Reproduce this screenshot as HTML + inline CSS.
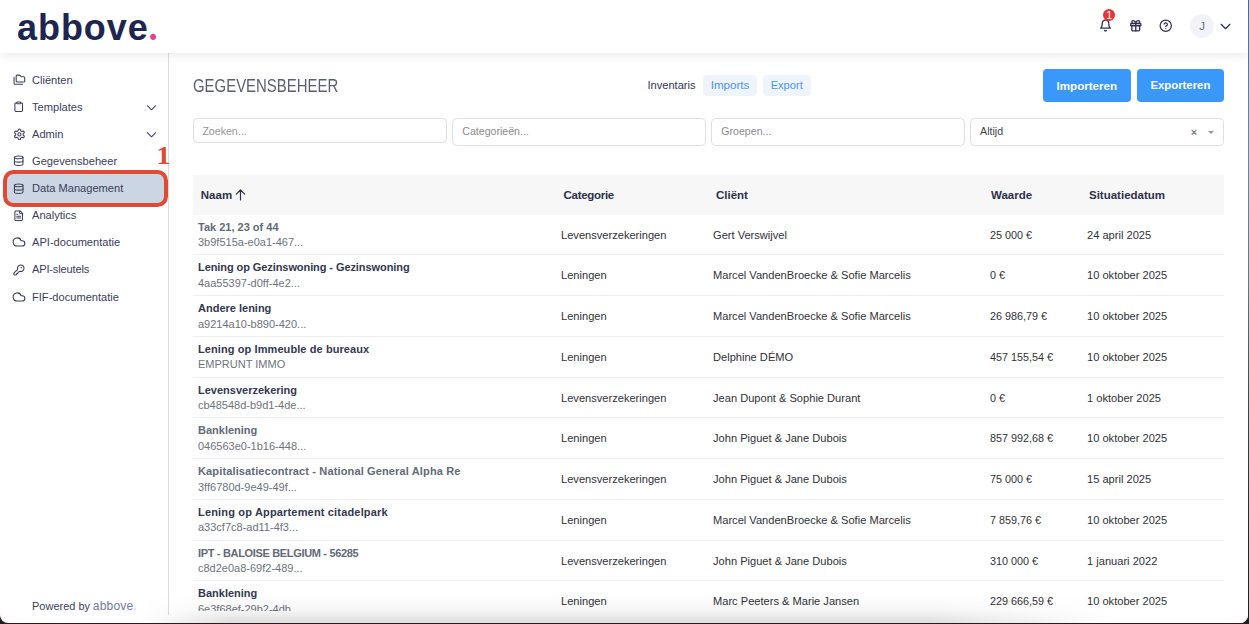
<!DOCTYPE html>
<html lang="nl">
<head>
<meta charset="utf-8">
<title>Gegevensbeheer - abbove</title>
<style>
*{box-sizing:border-box;margin:0;padding:0}
html,body{width:1249px;height:624px;overflow:hidden;background:#241d1f}
body{font-family:"Liberation Sans",sans-serif;color:#2f3553;position:relative}
#app{position:absolute;left:0;top:0;width:1248px;height:623px;background:#fff;overflow:hidden;border-radius:0 0 8px 8px}
#edge-r{position:absolute;left:1247px;top:0;width:2px;height:624px;background:linear-gradient(to bottom,#44699a 0%,#5f7da5 15%,#6c84a3 25%,#6a7480 45%,#3e4447 65%,#2a2426 85%,#231c1e 100%)}
#edge-b{position:absolute;left:0;top:622px;width:1249px;height:2px;background:#241d1f}
#win{position:absolute;left:0;top:0;width:1247.6px;height:622.7px;background:#fff;border-radius:0 0 8px 8px;overflow:hidden}

/* header */
#hdr{position:absolute;left:0;top:0;width:100%;height:52.5px;background:#fff;box-shadow:0 2px 10px rgba(0,0,0,.09);z-index:5}
#logo{position:absolute;left:17px;top:6px;font-weight:bold;font-size:36px;line-height:44px;color:#1d2550;letter-spacing:.95px}
#logo i{font-style:normal;color:#e83e8c;font-family:"Liberation Serif",serif;font-size:37px;margin-left:-.3px;position:relative;top:-.5px}
.hi{position:absolute;display:block}
#badge{position:absolute;left:1103px;top:8.5px;width:12.4px;height:12.4px;border-radius:50%;background:#e53535;color:#fff;font-size:11px;line-height:13.6px;text-align:center}
#ava{position:absolute;left:1190px;top:13.6px;width:24px;height:24px;border-radius:50%;background:#f0f4f8;color:#666c82;font-size:11.5px;line-height:25.5px;text-align:center}

/* sidebar */
#side{position:absolute;left:0;top:52px;width:169px;height:563px;border-right:1px solid #dcdde0}
.ni{position:absolute;left:6px;width:157px;height:25px;font-size:11.1px;line-height:25px;color:#3a405c;padding-left:26px;border-radius:5px;white-space:nowrap}
.ni svg{position:absolute;left:7.3px;top:6.5px;width:11.4px;height:11.4px;fill:none;stroke:#3a405c;stroke-width:2.2;stroke-linecap:round;stroke-linejoin:round}
.ni .chev{left:auto;right:6.5px;top:7px;width:11px;height:11px;stroke-width:2.2}
.ni.act{background:transparent}
#ring{position:absolute;left:3px;top:169.8px;width:165.3px;height:37.2px;border:4.2px solid #e04a35;border-radius:10.5px;background:#cbd5e3}
#one{position:absolute;left:157px;top:142.3px;transform:scaleX(1.1);transform-origin:50% 50%;font-family:"Liberation Serif",serif;font-weight:bold;font-size:26px;line-height:28px;color:#e04a35}
#pow{position:absolute;left:32px;top:597px;font-size:11px;line-height:14px;color:#3a405c;white-space:nowrap}
#pow b{font-weight:normal;color:#707a9c;font-size:12.1px;margin-left:-.3px;letter-spacing:.12px}
#pow b i{font-style:normal;color:#f2a0c4}

/* main */
#main{position:absolute;left:169px;top:52px;width:1079px;height:572px}
h1{position:absolute;left:24px;top:23px;font-weight:normal;font-size:17.8px;line-height:22px;color:#585e76;white-space:nowrap;transform:scaleX(.84);transform-origin:0 50%}
.tab{position:absolute;top:23.1px;height:20.5px;line-height:20.6px;font-size:11.1px;border-radius:4px;text-align:center;white-space:nowrap}
.tab.on{color:#2f3553}
.tab.p{background:#eff3fa;color:#4696f3}
.btn{position:absolute;top:17px;height:33px;line-height:33px;border-radius:4px;background:#3b98fb;color:#fff;font-weight:bold;font-size:11.6px;text-align:center;white-space:nowrap}
.flt{position:absolute;top:66.3px;height:27.3px;border:1px solid #e0e0e0;border-radius:4.5px;background:#fff;font-size:10.6px;line-height:25.5px;color:#8b8b8b;padding-left:9.3px;white-space:nowrap}
.flt.v{color:#444}
.flt.z{height:24.4px;line-height:24.2px;font-size:10.6px;color:#959595;padding-left:8.4px}
.flt .x{position:absolute;right:25.3px;top:.9px;font-size:11px;color:#808080;font-weight:bold}
.flt .c{position:absolute;right:9px;top:11.5px;width:0;height:0;border:3px solid transparent;border-top:3.5px solid #999;border-bottom:0}

/* table */
#tbl{position:absolute;left:24px;top:123px;width:1031px}
.th{position:relative;height:39.5px;background:#f7f7f7;font-weight:bold;font-size:11.5px;line-height:40.3px;color:#2d3148}
.th span,.tr span{position:absolute;white-space:nowrap}
.tr{position:relative;height:40.75px;border-bottom:1px solid #efefef;font-size:11.1px;color:#303238}
.tr span{top:0;line-height:40px}
.c1{left:5px}.c2{left:368px}.c3{left:520px}.c4{left:797px}.c5{left:894px}
.th .c1{left:7.8px}.th .c2{left:370.6px;letter-spacing:-.3px}.th .c3{left:523px}.th .c4{left:798px}.th .c5{left:896px}
.tr .c1{top:5.2px;line-height:15.4px;color:#6d737d;font-size:11px}
.tr .c4{font-size:10.8px}
.tr .c1 b{display:block;color:#333850;font-size:11px}
.tr.m .c1 b{color:#626a78}
#foot{position:absolute;left:169px;top:610.8px;width:1080px;height:14px;background:#fff}
#fade{position:absolute;left:0;top:594px;width:100%;height:29px;background:linear-gradient(to bottom,rgba(0,0,0,0),rgba(0,0,0,.035) 55%,rgba(0,0,0,.13) 100%);-webkit-mask-image:linear-gradient(to right,transparent 140px,#000 230px,#000 930px,transparent 1110px);mask-image:linear-gradient(to right,transparent 140px,#000 230px,#000 930px,transparent 1110px)}
</style>
</head>
<body>
<div id="edge-r"></div>
<div id="edge-b"></div>
<div id="win">

<div id="hdr">
  <div id="logo">abbove<i>.</i></div>
  <svg class="hi" style="left:1099px;top:19px" width="13" height="13" viewBox="0 0 24 24" fill="none" stroke="#2f3553" stroke-width="2.3" stroke-linecap="round" stroke-linejoin="round"><path d="M6 8a6 6 0 0 1 12 0c0 7 3 9 3 9H3s3-2 3-9"/><path d="M10.3 21a1.94 1.94 0 0 0 3.4 0"/></svg>
  <div id="badge">1</div>
  <svg class="hi" style="left:1129px;top:19px" width="13.5" height="13.5" viewBox="0 0 24 24" fill="none" stroke="#2f3553" stroke-width="2.4" stroke-linecap="round" stroke-linejoin="round"><rect x="3" y="8" width="18" height="4" rx="1"/><path d="M12 8v13"/><path d="M19 12v7a2 2 0 0 1-2 2H7a2 2 0 0 1-2-2v-7"/><path d="M7.5 8a2.5 2.5 0 0 1 0-5A4.8 8 0 0 1 12 8a4.8 8 0 0 1 4.5-5 2.5 2.5 0 0 1 0 5"/></svg>
  <svg class="hi" style="left:1159px;top:19.1px" width="13.5" height="13.5" viewBox="0 0 24 24" fill="none" stroke="#2f3553" stroke-width="2.2" stroke-linecap="round" stroke-linejoin="round"><circle cx="12" cy="12" r="10"/><path d="M9.09 9a3 3 0 0 1 5.83 1c0 2-3 3-3 3"/><path d="M12 17h.01"/></svg>
  <div id="ava">J</div>
  <svg class="hi" style="left:1219px;top:20px" width="13" height="13" viewBox="0 0 24 24" fill="none" stroke="#2f3553" stroke-width="2.4" stroke-linecap="round" stroke-linejoin="round"><path d="m4 8 8 8 8-8"/></svg>
</div>

<div id="ring"></div>
<div id="side">
  <div class="ni" style="top:16.00px"><svg viewBox="0 0 24 24" style="width:12.8px;height:12.8px;left:6.9px;top:5.4px;stroke-width:2"><path d="M20 17a2 2 0 0 0 2-2V9a2 2 0 0 0-2-2h-3.9a2 2 0 0 1-1.69-.9l-.81-1.2a2 2 0 0 0-1.67-.9H8a2 2 0 0 0-2 2v9a2 2 0 0 0 2 2Z"/><path d="M2 8v11a2 2 0 0 0 2 2h14"/></svg>Cliënten</div>
  <div class="ni" style="top:42.55px"><svg viewBox="0 0 24 24"><rect width="8" height="4" x="8" y="2" rx="1" ry="1"/><path d="M16 4h2a2 2 0 0 1 2 2v14a2 2 0 0 1-2 2H6a2 2 0 0 1-2-2V6a2 2 0 0 1 2-2h2"/></svg>Templates<svg class="chev" viewBox="0 0 24 24"><path d="m3 8 9 9 9-9"/></svg></div>
  <div class="ni" style="top:69.70px"><svg viewBox="0 0 24 24" style="width:12.8px;height:12.8px;left:6.6px;top:6px;stroke-width:2"><path d="M12.22 2h-.44a2 2 0 0 0-2 2v.18a2 2 0 0 1-1 1.73l-.43.25a2 2 0 0 1-2 0l-.15-.08a2 2 0 0 0-2.73.73l-.22.38a2 2 0 0 0 .73 2.73l.15.1a2 2 0 0 1 1 1.72v.51a2 2 0 0 1-1 1.74l-.15.09a2 2 0 0 0-.73 2.73l.22.38a2 2 0 0 0 2.73.73l.15-.08a2 2 0 0 1 2 0l.43.25a2 2 0 0 1 1 1.73V20a2 2 0 0 0 2 2h.44a2 2 0 0 0 2-2v-.18a2 2 0 0 1 1-1.73l.43-.25a2 2 0 0 1 2 0l.15.08a2 2 0 0 0 2.73-.73l.22-.39a2 2 0 0 0-.73-2.73l-.15-.08a2 2 0 0 1-1-1.74v-.5a2 2 0 0 1 1-1.74l.15-.09a2 2 0 0 0 .73-2.73l-.22-.38a2 2 0 0 0-2.73-.73l-.15.08a2 2 0 0 1-2 0l-.43-.25a2 2 0 0 1-1-1.73V4a2 2 0 0 0-2-2z"/><circle cx="12" cy="12" r="3"/></svg>Admin<svg class="chev" viewBox="0 0 24 24"><path d="m3 8 9 9 9-9"/></svg></div>
  <div class="ni" style="top:96.85px"><svg viewBox="0 0 24 24"><ellipse cx="12" cy="5" rx="9" ry="3"/><path d="M3 5v14a9 3 0 0 0 18 0V5"/><path d="M3 12a9 3 0 0 0 18 0"/></svg>Gegevensbeheer</div>
  <div class="ni act" style="top:124.00px"><svg viewBox="0 0 24 24"><ellipse cx="12" cy="5" rx="9" ry="3"/><path d="M3 5v14a9 3 0 0 0 18 0V5"/><path d="M3 12a9 3 0 0 0 18 0"/></svg>Data Management</div>
  <div class="ni" style="top:151.15px"><svg viewBox="0 0 24 24"><path d="M15 2H6a2 2 0 0 0-2 2v16a2 2 0 0 0 2 2h12a2 2 0 0 0 2-2V7Z"/><path d="M14 2v4a2 2 0 0 0 2 2h4"/><path d="M10 9H8"/><path d="M16 13H8"/><path d="M16 17H8"/></svg>Analytics</div>
  <div class="ni" style="top:178.30px"><svg viewBox="0 0 24 24" style="width:14px;height:14px;left:5.9px;top:5px;stroke-width:1.85"><path d="M17.5 19H9a7 7 0 1 1 6.71-9h1.79a4.5 4.5 0 1 1 0 9Z"/></svg>API-documentatie</div>
  <div class="ni" style="top:205.45px"><svg viewBox="0 0 24 24" style="width:12px;height:12px;left:6.9px;top:6.3px"><path d="M2.586 17.414A2 2 0 0 0 2 18.828V21a1 1 0 0 0 1 1h3a1 1 0 0 0 1-1v-1a1 1 0 0 1 1-1h1a1 1 0 0 0 1-1v-1a1 1 0 0 1 1-1h.172a2 2 0 0 0 1.414-.586l.814-.814a6.5 6.5 0 1 0-4-4z"/><circle cx="16.5" cy="7.5" r=".5" fill="#3a405c"/></svg><span style="letter-spacing:-.18px">API-sleutels</span></div>
  <div class="ni" style="top:232.60px"><svg viewBox="0 0 24 24" style="width:14px;height:14px;left:5.9px;top:5px;stroke-width:1.85"><path d="M17.5 19H9a7 7 0 1 1 6.71-9h1.79a4.5 4.5 0 1 1 0 9Z"/></svg>FIF-documentatie</div>
  <div id="pow" style="top:546.7px">Powered by <b>abbove<i>.</i></b></div>
</div>
<div id="one">1</div>

<div id="main">
  <h1>GEGEVENSBEHEER</h1>
  <div class="tab on" style="left:477.5px;width:50px">Inventaris</div>
  <div class="tab p" style="left:534px;width:54px;font-size:11.6px">Imports</div>
  <div class="tab p" style="left:593.7px;width:48px">Export</div>
  <div class="btn" style="left:873.8px;width:88px">Importeren</div>
  <div class="btn" style="left:968.2px;width:86.4px;font-size:11.35px">Exporteren</div>

  <div class="flt z" style="left:24px;width:253.5px">Zoeken...</div>
  <div class="flt" style="left:283px;width:253.5px">Categorieën...</div>
  <div class="flt" style="left:542px;width:253.5px">Groepen...</div>
  <div class="flt v" style="left:800.8px;width:253.8px">Altijd<span class="x">×</span><span class="c"></span></div>

  <div id="tbl">
    <div class="th"><span class="c1">Naam<svg width="11" height="12" viewBox="0 0 11 12" style="vertical-align:-1.5px;margin-left:2.6px" fill="none" stroke="#2d3148" stroke-width="1.2" stroke-linecap="round" stroke-linejoin="round"><path d="M5.5 11V1M1.3 5.2 5.5 1l4.2 4.2"/></svg></span><span class="c2">Categorie</span><span class="c3">Cliënt</span><span class="c4">Waarde</span><span class="c5">Situatiedatum</span></div>
    <div class="tr m"><span class="c1"><b>Tak 21, 23 of 44</b>3b9f515a-e0a1-467...</span><span class="c2">Levensverzekeringen</span><span class="c3">Gert Verswijvel</span><span class="c4">25 000 €</span><span class="c5">24 april 2025</span></div>
    <div class="tr"><span class="c1"><b style="letter-spacing:-.08px">Lening op Gezinswoning - Gezinswoning</b>4aa55397-d0ff-4e2...</span><span class="c2">Leningen</span><span class="c3">Marcel VandenBroecke &amp; Sofie Marcelis</span><span class="c4">0 €</span><span class="c5">10 oktober 2025</span></div>
    <div class="tr"><span class="c1"><b>Andere lening</b>a9214a10-b890-420...</span><span class="c2">Leningen</span><span class="c3">Marcel VandenBroecke &amp; Sofie Marcelis</span><span class="c4">26 986,79 €</span><span class="c5">10 oktober 2025</span></div>
    <div class="tr"><span class="c1"><b style="letter-spacing:.09px">Lening op Immeuble de bureaux</b>EMPRUNT IMMO</span><span class="c2">Leningen</span><span class="c3">Delphine DÉMO</span><span class="c4">457 155,54 €</span><span class="c5">10 oktober 2025</span></div>
    <div class="tr"><span class="c1"><b>Levensverzekering</b>cb48548d-b9d1-4de...</span><span class="c2">Levensverzekeringen</span><span class="c3">Jean Dupont &amp; Sophie Durant</span><span class="c4">0 €</span><span class="c5">1 oktober 2025</span></div>
    <div class="tr m"><span class="c1"><b>Banklening</b>046563e0-1b16-448...</span><span class="c2">Leningen</span><span class="c3">John Piguet &amp; Jane Dubois</span><span class="c4">857 992,68 €</span><span class="c5">10 oktober 2025</span></div>
    <div class="tr m"><span class="c1"><b style="letter-spacing:.14px">Kapitalisatiecontract - National General Alpha Re</b>3ff6780d-9e49-49f...</span><span class="c2">Levensverzekeringen</span><span class="c3">John Piguet &amp; Jane Dubois</span><span class="c4">75 000 €</span><span class="c5">15 april 2025</span></div>
    <div class="tr"><span class="c1"><b style="letter-spacing:.17px">Lening op Appartement citadelpark</b>a33cf7c8-ad11-4f3...</span><span class="c2">Leningen</span><span class="c3">Marcel VandenBroecke &amp; Sofie Marcelis</span><span class="c4">7 859,76 €</span><span class="c5">10 oktober 2025</span></div>
    <div class="tr m"><span class="c1"><b style="letter-spacing:-.33px">IPT - BALOISE BELGIUM - 56285</b>c8d2e0a8-69f2-489...</span><span class="c2">Levensverzekeringen</span><span class="c3">John Piguet &amp; Jane Dubois</span><span class="c4">310 000 €</span><span class="c5">1 januari 2022</span></div>
    <div class="tr"><span class="c1"><b>Banklening</b>6e3f68ef-29b2-4db...</span><span class="c2">Leningen</span><span class="c3">Marc Peeters &amp; Marie Jansen</span><span class="c4">229 666,59 €</span><span class="c5">10 oktober 2025</span></div>
  </div>
</div>
<div id="foot"></div>
<div id="fade"></div>
</div>
</body>
</html>
